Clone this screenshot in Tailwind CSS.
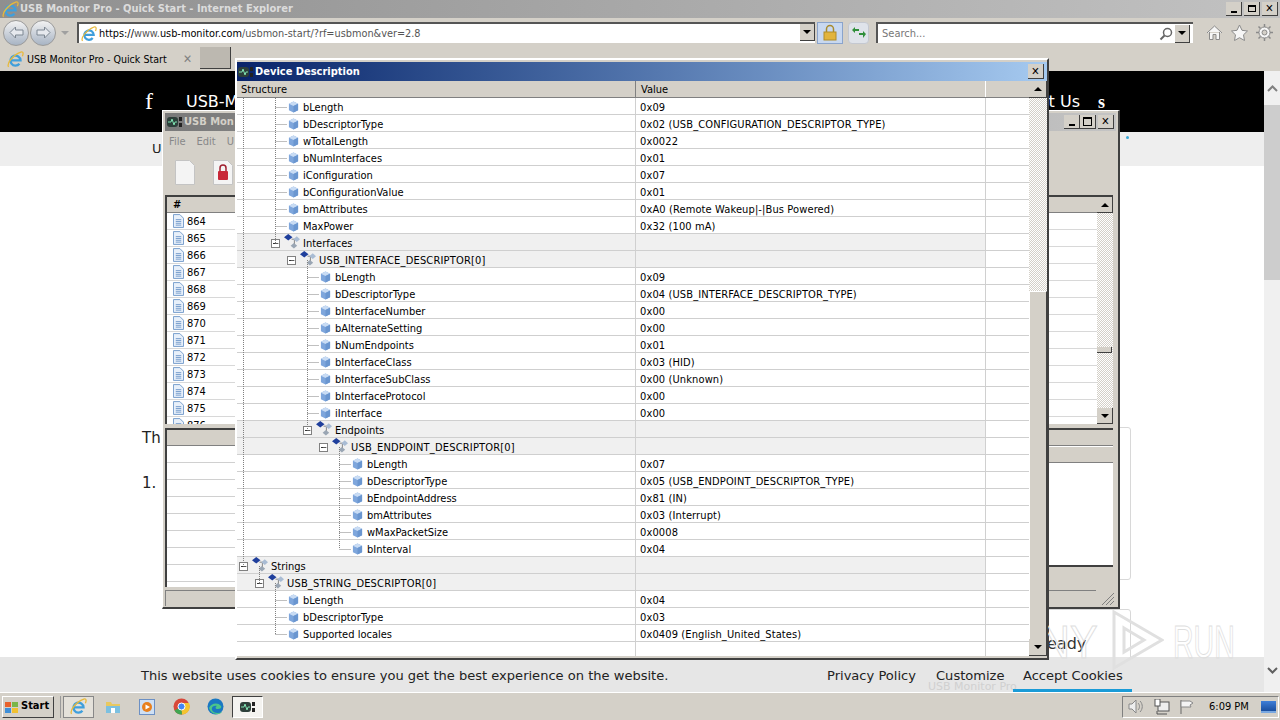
<!DOCTYPE html>
<html lang="en">
<head>
<meta charset="UTF-8">
<title>USB Monitor Pro - Quick Start - Internet Explorer</title>
<script src="https://cdn.jsdelivr.net/npm/@tailwindcss/browser@4"></script>
</head>
<body class="w-[1280px] h-[720px] overflow-hidden relative flex flex-col bg-[#d4d0c8] font-['DejaVu_Sans_Condensed','Noto_Sans',sans-serif] text-[11px] text-black">

<!-- shared icons -->
<svg class="hidden">
  <symbol id="ie" viewBox="0 0 16 16">
    <path d="M3.500 8.800h9.200a4.700 4.700 0 1 0-1 3.200" fill="none" stroke="#3f9fdc" stroke-width="2.200"/>
    <path d="M1.500 15C-.5 12 5 4 13 1c2.500-.7 2.500 1.500 1.500 4" fill="none" stroke="#e8b93a" stroke-width="1.200"/>
  </symbol>
  <symbol id="leaf" viewBox="0 0 12 13">
    <path d="M6 .5 11 3v7l-5 2.500L1 10V3z" fill="#7ea6dc"/>
    <path d="M6 .5 11 3 6 5.500 1 3z" fill="#c9dcf4"/>
    <path d="M6 5.500 11 3v7l-5 2.500z" fill="#6a96d0"/>
  </symbol>
  <symbol id="branch" viewBox="0 0 18 17">
    <path d="M4.500 0 9 3.500 4.500 7 0 3.500z" fill="#1f3f9c"/>
    <path d="M8 5.500h3.500M11 6v5" stroke="#808080" fill="none"/>
    <path d="M13.500 2.500 17 5.500l-3.500 3L10 5.500z" fill="#a9bcd4"/>
    <path d="M10.500 9.500 14 12.500l-3.500 3-3.500-3z" fill="#9aa6b4"/>
  </symbol>
  <symbol id="doc" viewBox="0 0 12 15">
    <path d="M.5.500h7l4 4v10H.5z" fill="#e8f0fa" stroke="#6f97c8"/>
    <path d="M3 6h6M3 8h6M3 10h6M3 12h6" stroke="#6f97c8"/>
  </symbol>
  <symbol id="app" viewBox="0 0 16 12">
    <rect x="0" y="1" width="11" height="10" rx="3" fill="#2d3f3a"/>
    <path d="M1 6h3l1-3 2 6 1-3h2" stroke="#7fe0b0" fill="none"/>
    <rect x="12" y="1" width="3" height="4" fill="#222"/>
    <rect x="12" y="7" width="3" height="4" fill="#222"/>
  </symbol>
</svg>

<!-- IE title bar -->
<div class="h-[18px] flex items-center justify-between bg-linear-to-r from-[#8f8f8f] to-[#c2c2c2]">
  <div class="flex items-center pl-[2px]">
    <svg class="w-[17px] h-[17px]"><use href="#ie"/></svg>
    <span class="text-[#dcdcdc] font-bold text-[11px] ml-px pt-px">USB Monitor Pro - Quick Start - Internet Explorer</span>
  </div>
  <div class="flex gap-[2px] pr-[2px]">
    <span class="w-[16px] h-[14px] bg-[#d4d0c8] border-r border-b border-[#404040] flex items-end justify-center pb-[2px]"><i class="block w-[6px] h-[2px] bg-black"></i></span>
    <span class="w-[16px] h-[14px] bg-[#d4d0c8] border-r border-b border-[#404040] flex items-center justify-center"><i class="block w-[8px] h-[7px] border border-t-2 border-black"></i></span>
    <span class="w-[16px] h-[14px] bg-[#d4d0c8] border-r border-b border-[#404040] flex items-center justify-center text-[11px] font-bold leading-none">✕</span>
  </div>
</div>

<!-- IE address row -->
<div class="h-[29px] flex items-center">
  <div class="flex items-center pl-[3px] w-[77px]">
    <span class="w-[26px] h-[26px] rounded-full border border-[#9a9a9a] bg-linear-to-b from-[#f2f2f2] to-[#a8b4c4] flex items-center justify-center">
      <svg class="w-[15px] h-[13px]" viewBox="0 0 15 13"><path d="M1 6.500 6.500 1v3H14v5H6.500v3z" fill="#e6e9ee" stroke="#7d8792"/></svg>
    </span>
    <span class="w-[26px] h-[26px] rounded-full border border-[#9a9a9a] bg-linear-to-b from-[#f2f2f2] to-[#a8b4c4] flex items-center justify-center ml-px">
      <svg class="w-[15px] h-[13px]" viewBox="0 0 15 13"><path d="M14 6.500 8.500 1v3H1v5h7.500v3z" fill="#e6e9ee" stroke="#7d8792"/></svg>
    </span>
    <span class="ml-[5px] w-0 h-0 border-x-[4px] border-x-transparent border-t-[4px] border-t-[#a0a0a0]"></span>
  </div>
  <div class="w-[738px] h-[21px] bg-white border-t-2 border-l-2 border-[#555] flex items-center relative">
    <svg class="w-[16px] h-[16px] ml-[2px]"><use href="#ie"/></svg>
    <span class="ml-[2px] pt-px text-[#555] text-[10.830px] whitespace-nowrap"><span class="text-black">https://</span>www.<span class="text-black">usb-monitor.com</span>/usbmon-start/?rf=usbmon&amp;ver=2.8</span>
    <span class="absolute right-0 top-0 w-[15px] h-[17px] bg-[#d4d0c8] border-r border-b border-[#404040] flex items-center justify-center"><i class="w-0 h-0 border-x-[4px] border-x-transparent border-t-[4px] border-t-black"></i></span>
  </div>
  <span class="w-[26px] h-[22px] ml-[2px] bg-[#c8d8f0] border border-[#8aa4cc] flex items-center justify-center">
    <svg class="w-[14px] h-[17px]" viewBox="0 0 14 17"><path d="M3.500 8V5a3.500 3.500 0 0 1 7 0v3" fill="none" stroke="#a88a2c" stroke-width="1.500"/><rect x="1" y="8" width="12" height="8" fill="#e2b43c" stroke="#b08c28"/></svg>
  </span>
  <span class="w-[21px] h-[22px] ml-[5px] bg-[#dfe3ea] border border-[#c4c8d0] rounded-sm flex items-center justify-center">
    <svg class="w-[16px] h-[13px]" viewBox="0 0 16 13"><path d="M1 4 4 1v2h4v2H4v2zM15 8l-3-3v2H8v2h4v3z" fill="#2f8f3a"/></svg>
  </span>
  <div class="w-[317px] h-[21px] ml-[7px] bg-white border-t-2 border-l-2 border-[#555] flex items-center justify-between">
    <span class="pl-[4px] pt-px text-[#777]">Search...</span>
    <span class="flex items-center pr-[3px]">
      <svg class="w-[14px] h-[14px]" viewBox="0 0 14 14"><circle cx="8.500" cy="5.500" r="4" fill="none" stroke="#666" stroke-width="1.500"/><path d="M5.500 8.500 1.500 12.500" stroke="#666" stroke-width="2"/></svg>
      <span class="w-[15px] h-[18px] ml-[2px] bg-[#d4d0c8] border-r border-b border-[#404040] flex items-center justify-center"><i class="w-0 h-0 border-x-[4px] border-x-transparent border-t-[4px] border-t-black"></i></span>
    </span>
  </div>
  <div class="flex items-center gap-[8px] ml-[13px]">
    <svg class="w-[17px] h-[17px]" viewBox="0 0 17 17"><path d="M1 9 8.500 2 16 9M3.500 8v7.500h3.500v-5h3v5h3.500V8" fill="#f6f6f6" stroke="#8a8a8a"/></svg>
    <svg class="w-[17px] h-[17px]" viewBox="0 0 17 17"><path d="M8.500 1 11 6.300l5.500.7-4 3.800 1 5.700-5-2.800-5 2.800 1-5.700-4-3.800L6 6.300z" fill="#f6f6f6" stroke="#8a8a8a"/></svg>
    <svg class="w-[17px] h-[17px]" viewBox="0 0 17 17"><circle cx="8.500" cy="8.500" r="5.500" fill="#f6f6f6" stroke="#8a8a8a" stroke-width="1"/><circle cx="8.500" cy="8.500" r="2.500" fill="#d4d0c8" stroke="#8a8a8a"/><path d="M8.500 0v3M8.500 14v3M0 8.500h3M14 8.500h3M2.500 2.500l2 2M12.500 12.500l2 2M2.500 14.500l2-2M12.500 4.500l2-2" stroke="#8a8a8a" stroke-width="1.500"/></svg>
  </div>
</div>

<!-- IE tab row -->
<div class="h-[24px] flex items-start">
  <div class="w-[197px] h-[24px] flex items-center pl-[7px] relative">
    <svg class="w-[17px] h-[17px]"><use href="#ie"/></svg>
    <span class="ml-[3px] pt-px text-[10.600px] whitespace-nowrap">USB Monitor Pro - Quick Start</span>
    <span class="absolute right-[5px] text-[#808080] font-bold text-[12px]">✕</span>
  </div>
  <div class="w-[31px] h-[22px] ml-[3px] bg-[#bcb8b0] border-r border-b border-[#404040]"></div>
</div>

<!-- web page behind the windows -->
<div class="h-[621px] flex bg-white">
  <div class="w-[1264px] flex flex-col font-['DejaVu_Sans',sans-serif] relative">
    <div class="h-[61px] bg-black text-white flex items-center pl-[145px] text-[16px]">
      <span class="font-['Liberation_Serif',serif] text-[24px] w-[41px] -translate-y-[1px]">f</span>
      <span>USB-M</span>
      <span class="ml-auto mr-[184px]">t Us</span>
      <span class="absolute left-[1098px] top-[22px] font-['Liberation_Serif',serif] text-[18px] font-bold leading-none">s</span>
    </div>
    <div class="h-[34px] bg-[#eeeeee] flex items-center pl-[152px] text-[13px] text-[#222] relative">
      U
      <span class="absolute left-[1126px] top-[4px] w-[3px] h-[3px] rounded-full bg-[#38a8d8]"></span>
    </div>
    <div class="flex-1 flex flex-col pl-[142px] pt-[261px] text-[15px] text-[#222] gap-[22px] relative">
      <p>Th</p>
      <p>1.</p>
      <span class="absolute left-[1000px] top-[261px] w-[131px] h-[153px] border border-[#d8d8d8] rounded-[3px]"></span>
      <span class="absolute left-[1000px] top-[443px] w-[131px] h-[60px] border border-[#d8d8d8] rounded-[3px]"></span>
      <span class="absolute left-[1047px] top-[466px] text-[16px] text-[#333]">eady</span>
    </div>
    <div class="h-[35px] pt-[2px] bg-[#e6e6e6] flex items-center pl-[141px] text-[13.050px] text-[#222] relative whitespace-nowrap">
      <span>This website uses cookies to ensure you get the best experience on the website.</span>
      <span class="absolute left-[827px]">Privacy Policy</span>
      <span class="absolute left-[936px]">Customize</span>
      <span class="absolute left-[1023px]">Accept Cookies</span>
      <span class="absolute left-[928px] top-[22px] text-[11px] text-[#d0d0d0]">USB Monitor Pro</span>
      <span class="absolute left-[1013px] bottom-0 w-[119px] h-[3px] bg-[#1a9bd7]"></span>
    </div>
  </div>
  <!-- page scrollbar -->
  <div class="w-[16px] bg-[#f0f0f0] flex flex-col relative">
    <div class="h-[34px] flex items-center justify-center">
      <svg class="w-[11px] h-[7px]" viewBox="0 0 11 7"><path d="M1 6 5.500 1.500 10 6" fill="none" stroke="#808080" stroke-width="2"/></svg>
    </div>
    <div class="h-[175px] bg-[#cdcdcd]"></div>
    <div class="flex-1"></div>
    <div class="h-[44px] flex items-center justify-center">
      <svg class="w-[11px] h-[7px]" viewBox="0 0 11 7"><path d="M1 1 5.500 5.500 10 1" fill="none" stroke="#606060" stroke-width="2"/></svg>
    </div>
  </div>
</div>

<!-- taskbar -->
<div class="h-[28px] border-t border-white flex items-center bg-[#d4d0c8] pl-[2px]">
  <div class="w-[52px] h-[22px] bg-[#d4d0c8] border border-t-white border-l-white border-r-[#404040] border-b-[#404040] flex items-center pl-px font-bold">
    <svg class="w-[16px] h-[14px]" viewBox="0 0 16 14"><path d="M1 2h6v5H1z" fill="#e8622c"/><path d="M8 2h6v5H8z" fill="#7ab648"/><path d="M1 8h6v5H1z" fill="#3f8fd8"/><path d="M8 8h6v5H8z" fill="#f0c030"/></svg>
    <span class="ml-[1px] text-[11px]">Start</span>
  </div>
  <div class="w-px h-[22px] bg-[#9a9a9a] ml-[6px]"></div>
  <div class="w-[31px] h-[22px] ml-[2px] bg-[#e4e1da] border border-[#888] flex items-center justify-center"><svg class="w-[17px] h-[17px]"><use href="#ie"/></svg></div>
  <div class="w-[34px] ml-[2px] flex justify-center">
    <svg class="w-[16px] h-[15px]" viewBox="0 0 16 15"><path d="M1 3h5l1 2h8v9H1z" fill="#e8c860"/><path d="M1 7h14v7H1z" fill="#7cc0e0"/><rect x="6" y="9" width="4" height="5" fill="#fff"/></svg>
  </div>
  <div class="w-[34px] flex justify-center">
    <svg class="w-[16px] h-[16px]" viewBox="0 0 16 16"><rect x=".5" y=".5" width="15" height="15" fill="#cfe0f4" stroke="#6c90c4"/><circle cx="8" cy="8" r="5" fill="#e8801e"/><path d="M6.500 5.500 11 8l-4.500 2.500z" fill="#fff"/></svg>
  </div>
  <div class="w-[34px] flex justify-center">
    <svg class="w-[17px] h-[17px]" viewBox="0 0 17 17"><circle cx="8.500" cy="8.500" r="8" fill="#d8483a"/><path d="M8.500 8.500 1.500 12.500A8 8 0 0 0 9 16.500z" fill="#3fa652"/><path d="M8.500 8.500 9 16.500A8 8 0 0 0 16 5H8.500z" fill="#f4c430"/><circle cx="8.500" cy="8.500" r="3.500" fill="#4285f4" stroke="#fff"/></svg>
  </div>
  <div class="w-[34px] flex justify-center">
    <svg class="w-[17px] h-[17px]" viewBox="0 0 17 17"><circle cx="8.500" cy="8.500" r="8" fill="#1a78c2"/><path d="M2 10c2-5 9-6 12-2 1 2-1 3-3 3-3 0-3-2-1-3-3-1-6 1-5 4 1 3 6 4 10 2-2 3-10 4-13-4z" fill="#4cc68a"/></svg>
  </div>
  <div class="w-[31px] h-[22px] bg-[#f4f3f0] border border-t-[#404040] border-l-[#404040] border-r-white border-b-white flex items-center justify-center"><svg class="w-[16px] h-[12px]"><use href="#app"/></svg></div>
  <div class="ml-auto w-[157px] h-[22px] border border-t-[#808080] border-l-[#808080] border-r-white border-b-white flex items-center mr-[1px] pl-[5px]">
    <svg class="w-[16px] h-[15px]" viewBox="0 0 16 15"><path d="M1 5h3l4-4v13l-4-4H1z" fill="#eee" stroke="#888"/><path d="M10 4c2 2 2 5 0 7M12 2c3 3 3 8 0 11" fill="none" stroke="#888"/></svg>
    <svg class="w-[16px] h-[16px] ml-[10px]" viewBox="0 0 16 16"><rect x="4" y="3" width="11" height="9" fill="#eee" stroke="#555"/><rect x="1" y="0" width="5" height="7" fill="#fff" stroke="#555"/><path d="M3 12v3h10" stroke="#555" fill="none"/></svg>
    <svg class="w-[16px] h-[16px] ml-[9px]" viewBox="0 0 16 16"><path d="M2 1v14" stroke="#666"/><path d="M2 2h9l3 2-3 2 1 2H2z" fill="#f4f4f4" stroke="#888"/></svg>
    <span class="ml-[14px] pt-px text-[11px]">6:09 PM</span>
    <span class="ml-auto mr-[2px] w-[15px] h-[12px] bg-linear-to-b from-[#3f7fd8] to-[#1a4fa0] border-b-2 border-[#7aa8e0]"></span>
  </div>
</div>

<!-- USB Monitor Pro window (behind) -->
<div class="absolute left-[162px] top-[110px] w-[958px] h-[499px] bg-[#d4d0c8] border-r-2 border-b-2 border-[#404040] border-t border-l border-t-white border-l-white p-[2px] flex flex-col">
  <div class="h-[18px] shrink-0 bg-linear-to-r from-[#7a7a7a] to-[#c4c4c4] flex items-center justify-between px-[2px]">
    <div class="flex items-center gap-[1px]">
      <svg class="w-[16px] h-[12px]"><use href="#app"/></svg>
      <span class="font-bold text-[#d4d0c8] whitespace-nowrap pt-px">USB Mon</span>
    </div>
    <div class="flex items-center">
      <span class="w-[16px] h-[14px] bg-[#d4d0c8] border-r border-b border-[#404040] flex items-end justify-center pb-[2px]"><i class="block w-[6px] h-[2px] bg-black"></i></span>
      <span class="w-[16px] h-[14px] bg-[#d4d0c8] border-r border-b border-[#404040] flex items-center justify-center"><i class="block w-[9px] h-[9px] border border-t-2 border-black"></i></span>
      <span class="w-[16px] h-[14px] ml-[2px] bg-[#d4d0c8] border-r border-b border-[#404040] flex items-center justify-center text-[11px] font-bold leading-none">✕</span>
    </div>
  </div>
  <div class="h-[22px] shrink-0 flex items-center gap-[11px] pl-[4px] text-[#888]"><span>File</span><span>Edit</span><span>U</span></div>
  <div class="h-[42px] shrink-0 flex items-center pl-[10px] gap-[18px] pb-[4px]">
    <svg class="w-[20px] h-[25px]" viewBox="0 0 20 25"><path d="M.5.500h14l5 5v19H.5z" fill="#f4f4f4" stroke="#c4c4c4"/></svg>
    <svg class="w-[20px] h-[25px]" viewBox="0 0 20 25"><path d="M.5.500h14l5 5v19H.5z" fill="#f4f4f4" stroke="#c4c4c4"/><path d="M7 11V8a3 3 0 0 1 6 0v3" fill="none" stroke="#a02030" stroke-width="1.500"/><rect x="5" y="11" width="10" height="9" rx="1" fill="#c82838"/></svg>
  </div>
  <!-- packet list -->
  <div class="h-[229px] shrink-0 mr-[3px] border-t-2 border-l-2 border-[#404040] bg-white flex overflow-hidden">
    <div class="flex-1 flex flex-col min-w-0 overflow-hidden">
      <div class="h-[16px] shrink-0 bg-[#d4d0c8] border-b border-[#808080] pl-[6px] leading-[16px] font-bold">#</div>
      <div id="packets" class="flex-1 overflow-hidden"></div>
    </div>
    <div class="w-[16px] shrink-0 bg-[repeating-conic-gradient(#d4d0c8_0_25%,#ffffff_0_50%)] bg-[length:2px_2px] flex flex-col justify-between relative">
      <span class="h-[16px] bg-[#d4d0c8] border-r border-b border-[#404040] flex items-center justify-center"><i class="w-0 h-0 border-x-[4px] border-x-transparent border-b-[4px] border-b-black"></i></span>
      <span class="absolute top-[150px] left-0 w-[15px] h-[6px] bg-[#d4d0c8] border-r border-b border-[#404040]"></span>
      <span class="h-[16px] bg-[#d4d0c8] border-r border-b border-[#404040] flex items-center justify-center"><i class="w-0 h-0 border-x-[4px] border-x-transparent border-t-[4px] border-t-black"></i></span>
    </div>
  </div>
  <!-- detail pane -->
  <div class="h-[159px] shrink-0 mt-[4px] mr-[3px] border-t-2 border-l-2 border-[#404040] bg-white flex flex-col overflow-hidden relative">
    <div class="h-[16px] shrink-0 bg-[#d4d0c8] border-b border-[#808080]"></div>
    <div id="details" class="flex-1 overflow-hidden"></div>
    <div class="absolute right-0 top-[16px] w-[120px] h-[17px] bg-[#d4d0c8] border-b border-[#808080] border-t border-t-white"></div>
    <div class="absolute right-0 top-[33px] w-[120px] h-[104px] bg-white"></div>
    <div class="absolute right-0 bottom-0 w-[120px] h-[22px] bg-[#d4d0c8] border-t-2 border-[#404040]"></div>
  </div>
  <div class="flex-1 mt-[3px] flex items-stretch">
    <div class="flex-1 border-t border-l border-[#808080] border-r-white border-b-white"></div>
    <svg class="w-[20px] h-[16px] self-end" viewBox="0 0 20 16"><path d="M18 3 6 15M18 7l-8 8M18 11l-4 4" stroke="#808080" fill="none"/></svg>
  </div>
</div>

<!-- Device Description dialog -->
<div class="absolute left-[235px] top-[58px] w-[814px] h-[602px] bg-[#d4d0c8] border-2 border-t-white border-l-white border-r-[#404040] border-b-[#404040] pt-[2px] pb-[2px] flex flex-col">
  <div class="h-[19px] shrink-0 bg-linear-to-r from-[#0a246a] to-[#a6caf0] flex items-center justify-between pl-[1px] pr-[3px]">
    <div class="flex items-center gap-[1px]">
      <svg class="w-[16px] h-[12px]"><use href="#app"/></svg>
      <span class="font-bold text-white text-[11px] pt-px">Device Description</span>
    </div>
    <span class="w-[16px] h-[15px] bg-[#d4d0c8] border-r border-b border-[#404040] flex items-center justify-center text-[11px] font-bold leading-none">✕</span>
  </div>
  <div class="flex-1 flex min-h-0">
    <div class="flex-1 flex flex-col min-w-0 bg-white relative">
      <div class="h-[17px] shrink-0 bg-[#d4d0c8] border-b border-[#808080] flex leading-[18px]">
        <div class="w-[399px] border-r border-[#808080] pl-[4px]">Structure</div>
        <div class="w-[350px] border-r border-white pl-[5px]">Value</div>
      </div>
      <div id="rows" class="flex-1 relative overflow-hidden"></div>
    </div>
    <div class="w-[18px] shrink-0 bg-[repeating-conic-gradient(#d4d0c8_0_25%,#ffffff_0_50%)] bg-[length:2px_2px] flex flex-col">
      <span class="h-[17px] shrink-0 bg-[#d4d0c8] border-r border-b border-[#404040] flex items-center justify-center"><i class="w-0 h-0 border-x-[4px] border-x-transparent border-b-[4px] border-b-black"></i></span>
      <span class="h-[193px] shrink-0"></span>
      <span class="flex-1 bg-[#d4d0c8] border-t border-l border-white border-r border-r-[#404040]"></span>
      <span class="h-[17px] shrink-0 bg-[#d4d0c8] border-r border-b border-[#404040] flex items-center justify-center"><i class="w-0 h-0 border-x-[4px] border-x-transparent border-t-[4px] border-t-black"></i></span>
    </div>
  </div>
</div>

<!-- watermark -->
<div class="absolute left-[1048px] top-[610px] w-[190px] h-[60px] overflow-hidden pointer-events-none font-['Liberation_Sans',sans-serif] text-[46px] leading-none text-transparent [-webkit-text-stroke:1px_#dedede]">
  <span class="absolute left-[-8px] top-[9px] scale-x-[0.9] origin-left whitespace-nowrap">NY</span>
  <svg class="absolute left-[64px] top-0 w-[52px] h-[60px]" viewBox="0 0 52 60"><path d="M2 2 50 30 2 58zM12 18 32 30 12 42z" fill="none" stroke="#e0e0e0" stroke-width="3"/></svg>
  <span class="absolute left-[125px] top-[9px] scale-x-[0.62] origin-left whitespace-nowrap">RUN</span>
</div>

<script>
  // x = where the label starts on screen, kind: l = leaf, b = branch
  const rows = [
    ['l', 303, 'bLength', '0x09'], ['l', 303, 'bDescriptorType', '0x02 (USB_CONFIGURATION_DESCRIPTOR_TYPE)'],
    ['l', 303, 'wTotalLength', '0x0022'], ['l', 303, 'bNumInterfaces', '0x01'],
    ['l', 303, 'iConfiguration', '0x07'], ['l', 303, 'bConfigurationValue', '0x01'],
    ['l', 303, 'bmAttributes', '0xA0 (Remote Wakeup|-|Bus Powered)'], ['l', 303, 'MaxPower', '0x32 (100 mA)'],
    ['b', 303, 'Interfaces', ''], ['b', 319, 'USB_INTERFACE_DESCRIPTOR[0]', ''],
    ['l', 335, 'bLength', '0x09'], ['l', 335, 'bDescriptorType', '0x04 (USB_INTERFACE_DESCRIPTOR_TYPE)'],
    ['l', 335, 'bInterfaceNumber', '0x00'], ['l', 335, 'bAlternateSetting', '0x00'],
    ['l', 335, 'bNumEndpoints', '0x01'], ['l', 335, 'bInterfaceClass', '0x03 (HID)'],
    ['l', 335, 'bInterfaceSubClass', '0x00 (Unknown)'], ['l', 335, 'bInterfaceProtocol', '0x00'],
    ['l', 335, 'iInterface', '0x00'], ['b', 335, 'Endpoints', ''],
    ['b', 351, 'USB_ENDPOINT_DESCRIPTOR[0]', ''], ['l', 367, 'bLength', '0x07'],
    ['l', 367, 'bDescriptorType', '0x05 (USB_ENDPOINT_DESCRIPTOR_TYPE)'], ['l', 367, 'bEndpointAddress', '0x81 (IN)'],
    ['l', 367, 'bmAttributes', '0x03 (Interrupt)'], ['l', 367, 'wMaxPacketSize', '0x0008'],
    ['l', 367, 'bInterval', '0x04'], ['b', 271, 'Strings', ''],
    ['b', 287, 'USB_STRING_DESCRIPTOR[0]', ''], ['l', 303, 'bLength', '0x04'],
    ['l', 303, 'bDescriptorType', '0x03'], ['l', 303, 'Supported locales', '0x0409 (English_United_States)'],
  ];

  // rows box starts at x=237 on the screen, first row at y=98
  const ox = 237;
  let tree = '';
  rows.forEach(([kind, x, name, value]) => {
    const left = x - ox;
    const icon = kind === 'l'
      ? `<svg class="absolute top-[3px] w-[11px] h-[12px]" style="left:${left - 15}px"><use href="#leaf"/></svg>`
      : `<svg class="absolute top-0 w-[17px] h-[16px]" style="left:${left - 19}px"><use href="#branch"/></svg>
         <span class="absolute top-[5px] w-[9px] h-[9px] bg-white border border-[#808080] flex items-center justify-center" style="left:${left - 32}px"><i class="block w-[5px] h-px bg-[#333]"></i></span>`;
    tree += `<div class="h-[17px] flex border-b border-[#cfcfcf] relative leading-[20px] whitespace-nowrap ${kind === 'b' ? 'bg-[#f0f0f0]' : ''}">
      <div class="w-[399px] shrink-0 border-r border-[#d0d0d0] relative">${icon}<span class="absolute ${name.startsWith('USB_') ? 'tracking-[0.18px]' : ''}" style="left:${left}px">${name}</span></div>
      <div class="w-[350px] shrink-0 border-r border-[#d0d0d0] pl-[4px] tracking-[0.12px]">${value}</div>
      <div class="flex-1 bg-white"></div>
    </div>`;
  });
  // dotted tree lines, in the coordinates of the rows box
  const h = [];
  rows.forEach(([kind, x], i) => {
    const y = 9.5 + 17 * i;
    h.push(`M${x - 28 - ox + 0.5} ${y}h${kind === 'l' ? 11 : 4}`);
  });
  const lines = 'M6.500 0V468M38.500 0V145M70.500 162V332M102.500 349V451M22.500 468V485M38.500 485V536' + h.join('');
  tree += `<svg class="absolute left-0 top-0 pointer-events-none" width="399" height="560"><path d="${lines}" fill="none" stroke="#808080" stroke-dasharray="1 1"/></svg>`;
  tree += `<div class="absolute left-[398px] top-[544px] bottom-0 border-r border-[#d0d0d0]"></div><div class="absolute left-[748px] top-[544px] bottom-0 border-r border-[#d0d0d0]"></div>`;
  document.getElementById('rows').innerHTML = tree;

  let packets = '';
  for (let n = 864; n <= 876; n++) {
    packets += `<div class="h-[17px] border-b border-[#d8d8d8] flex items-center pl-[6px]"><svg class="w-[11px] h-[14px]"><use href="#doc"/></svg><span class="ml-[3px] pt-[2px]">${n}</span></div>`;
  }
  document.getElementById('packets').innerHTML = packets;

  let details = '';
  for (let n = 0; n < 8; n++) details += `<div class="h-[17px] border-b border-[#d0d0d0]"></div>`;
  document.getElementById('details').innerHTML = details;
</script>
</body>
</html>
